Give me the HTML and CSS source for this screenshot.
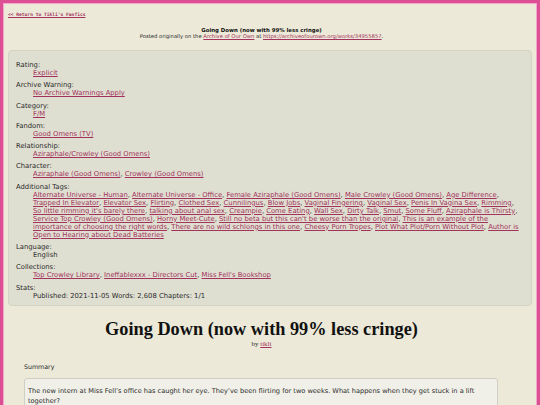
FILE: index.html
```html
<!DOCTYPE html>
<html>
<head>
<meta charset="utf-8">
<title>Going Down (now with 99% less cringe)</title>
<link rel="stylesheet" href="styles.css">
</head>
<body>
<div class="page">
  <p class="back"><a href="#">&lt;&lt; Return to Tikli's Fanfics</a></p>
  <div class="origin">
    <p class="origin-title">Going Down (now with 99% less cringe)</p>
    <p class="origin-posted">Posted originally on the <a href="#">Archive of Our Own</a> at <a href="#">https://archiveofourown.org/works/34955857</a>.</p>
  </div>
  <dl class="meta">
    <dt>Rating:</dt>
    <dd><a href="#">Explicit</a></dd>
    <dt>Archive Warning:</dt>
    <dd><a href="#">No Archive Warnings Apply</a></dd>
    <dt>Category:</dt>
    <dd><a href="#">F/M</a></dd>
    <dt>Fandom:</dt>
    <dd><a href="#">Good Omens (TV)</a></dd>
    <dt>Relationship:</dt>
    <dd><a href="#">Aziraphale/Crowley (Good Omens)</a></dd>
    <dt>Character:</dt>
    <dd><a href="#">Aziraphale (Good Omens)</a>, <a href="#">Crowley (Good Omens)</a></dd>
    <dt>Additional Tags:</dt>
    <dd><a href="#">Alternate Universe - Human</a>, <a href="#">Alternate Universe - Office</a>, <a href="#">Female Aziraphale (Good Omens)</a>, <a href="#">Male Crowley (Good Omens)</a>, <a href="#">Age Difference</a>, <a href="#">Trapped In Elevator</a>, <a href="#">Elevator Sex</a>, <a href="#">Flirting</a>, <a href="#">Clothed Sex</a>, <a href="#">Cunnilingus</a>, <a href="#">Blow Jobs</a>, <a href="#">Vaginal Fingering</a>, <a href="#">Vaginal Sex</a>, <a href="#">Penis In Vagina Sex</a>, <a href="#">Rimming</a>, <a href="#">So little rimming it's barely there</a>, <a href="#">talking about anal sex</a>, <a href="#">Creampie</a>, <a href="#">Come Eating</a>, <a href="#">Wall Sex</a>, <a href="#">Dirty Talk</a>, <a href="#">Smut</a>, <a href="#">Some Fluff</a>, <a href="#">Aziraphale is Thirsty</a>, <a href="#">Service Top Crowley (Good Omens)</a>, <a href="#">Horny Meet-Cute</a>, <a href="#">Still no beta but this can't be worse than the original</a>, <a href="#">This is an example of the importance of choosing the right words</a>, <a href="#">There are no wild schlongs in this one</a>, <a href="#">Cheesy Porn Tropes</a>, <a href="#">Plot What Plot/Porn Without Plot</a>, <a href="#">Author is Open to Hearing about Dead Batteries</a></dd>
    <dt>Language:</dt>
    <dd>English</dd>
    <dt>Collections:</dt>
    <dd><a href="#">Top Crowley Library</a>, <a href="#">Ineffablexxx - Directors Cut</a>, <a href="#">Miss Fell's Bookshop</a></dd>
    <dt>Stats:</dt>
    <dd>Published: 2021-11-05 Words: 2,608 Chapters: 1/1</dd>
  </dl>
  <div class="work-head">
    <h1 class="work-title">Going Down (now with 99% less cringe)</h1>
    <p class="byline">by <a href="#">tikli</a></p>
  </div>
  <div class="summary">
    <p class="summary-label">Summary</p>
    <blockquote class="summary-text">
      <p>The new intern at Miss Fell’s office has caught her eye. They’ve been flirting for two weeks. What happens when they get stuck in a lift together?</p>
    </blockquote>
  </div>
</div>
</body>
</html>
```
FILE: styles.css
```css
html {
  background: #ece9d8;
  height: 100%;
  overflow: hidden;
}
body {
  margin: 0;
  min-height: 100%;
  box-sizing: border-box;
  border: 3px solid #dc4f95;
  box-shadow: inset 0 0 0 1px #f2a6c9;
  background: #ece9d8;
  font-family: "DejaVu Sans", Verdana, sans-serif;
  color: #2a2a2a;
}
.page {
  padding: 9px 5px 0;
}
a {
  color: #a3325c;
}
p {
  margin: 0;
}
.back {
  font-family: "DejaVu Sans Mono", "Liberation Mono", monospace;
  font-weight: bold;
  font-size: 4.6px;
  line-height: 6px;
}
.origin {
  text-align: center;
  margin-top: 9px;
  padding-right: 17px;
  font-size: 5.25px;
  line-height: 6px;
}
.origin-title {
  font-weight: bold;
  color: #111;
  font-size: 5.4px;
}
.meta {
  margin: 11px 0 0;
  padding: 10px 7px 1px;
  background: #dfdfd1;
  border: 1px solid #d3d3c3;
  border-radius: 4px;
  font-size: 6.8px;
  line-height: 8px;
}
.meta dt {
  margin: 0;
}
.meta dd {
  margin: 0 0 4.3px 17px;
}
.work-head {
  text-align: center;
  margin-top: 12px;
  padding-right: 17px;
}
.work-title {
  margin: 0;
  font-family: "Liberation Serif", "Times New Roman", serif;
  font-weight: bold;
  font-size: 18.3px;
  line-height: 22px;
  color: #111;
}
.byline {
  font-family: "Liberation Serif", "Times New Roman", serif;
  font-size: 7px;
  line-height: 9px;
}
.summary {
  margin: 14px 34px 0 16px;
}
.summary-label {
  font-size: 6.3px;
  line-height: 8px;
}
.summary-text {
  margin: 7px 0 0;
  padding: 7px 8px 8px 3px;
  background: #f0f0e8;
  border: 1px solid #cfcfc4;
  border-radius: 3px;
  font-size: 6.6px;
  line-height: 10px;
}
```
